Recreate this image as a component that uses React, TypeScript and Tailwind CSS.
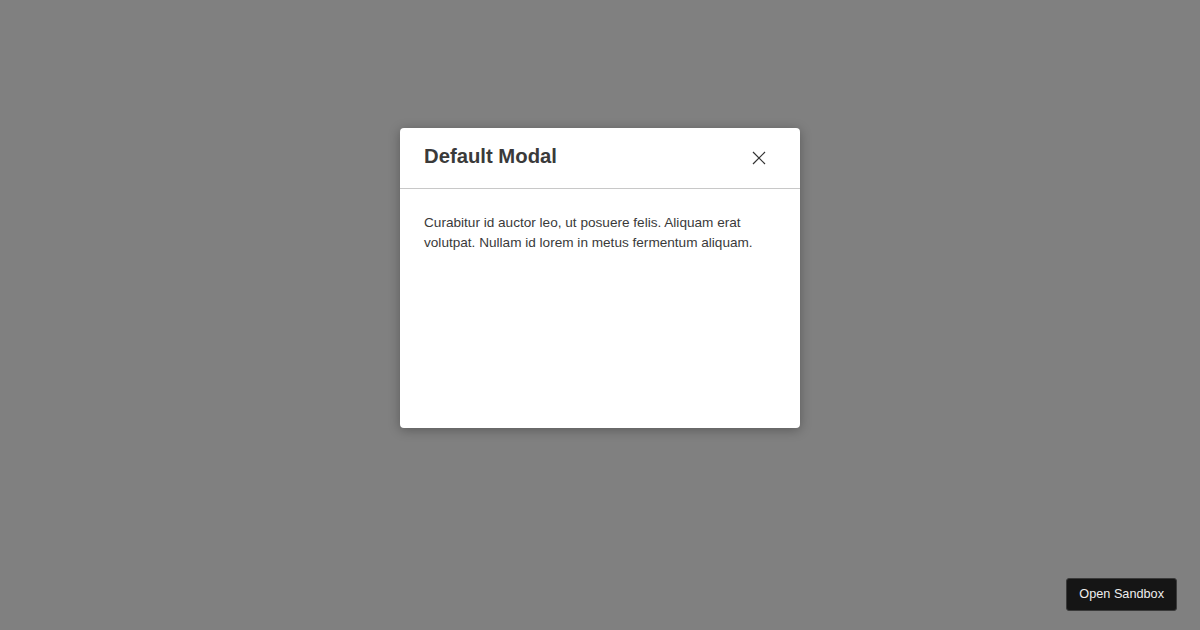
export default function App() {
  return (
    <div className="relative flex h-[630px] w-[1200px] items-start justify-center bg-[#808080] font-['Liberation_Sans',Arial,sans-serif]">
      <div className="mt-[128px] flex h-[300px] w-[400px] flex-col rounded-[4px] bg-white shadow-[0_2px_12px_rgba(0,0,0,0.3)]">
        <div className="flex h-[61px] items-center justify-between border-b border-[#c8c8c8] pb-[4px] pl-6 pr-[34px]">
          <h2 className="text-[20.3px] font-bold text-[#3a3a3a]">Default Modal</h2>
          <svg width="14" height="14" viewBox="0 0 14 14" fill="none" stroke="#333" strokeWidth="1.2" className="mt-[4px]">
            <path d="M1 1 L13 13 M13 1 L1 13" />
          </svg>
        </div>
        <div className="px-6 pt-[24px] text-[13.6px] leading-[20px] text-[#3a3a3a]">
          Curabitur id auctor leo, ut posuere felis. Aliquam erat volutpat. Nullam id lorem in metus fermentum aliquam.
        </div>
      </div>
      <button className="absolute bottom-[19px] right-[23px] h-[33px] rounded-[3px] border border-[#3a3a3a] bg-[#151515] px-3 text-[12.7px] text-[#eee]">
        Open Sandbox
      </button>
    </div>
  );
}
